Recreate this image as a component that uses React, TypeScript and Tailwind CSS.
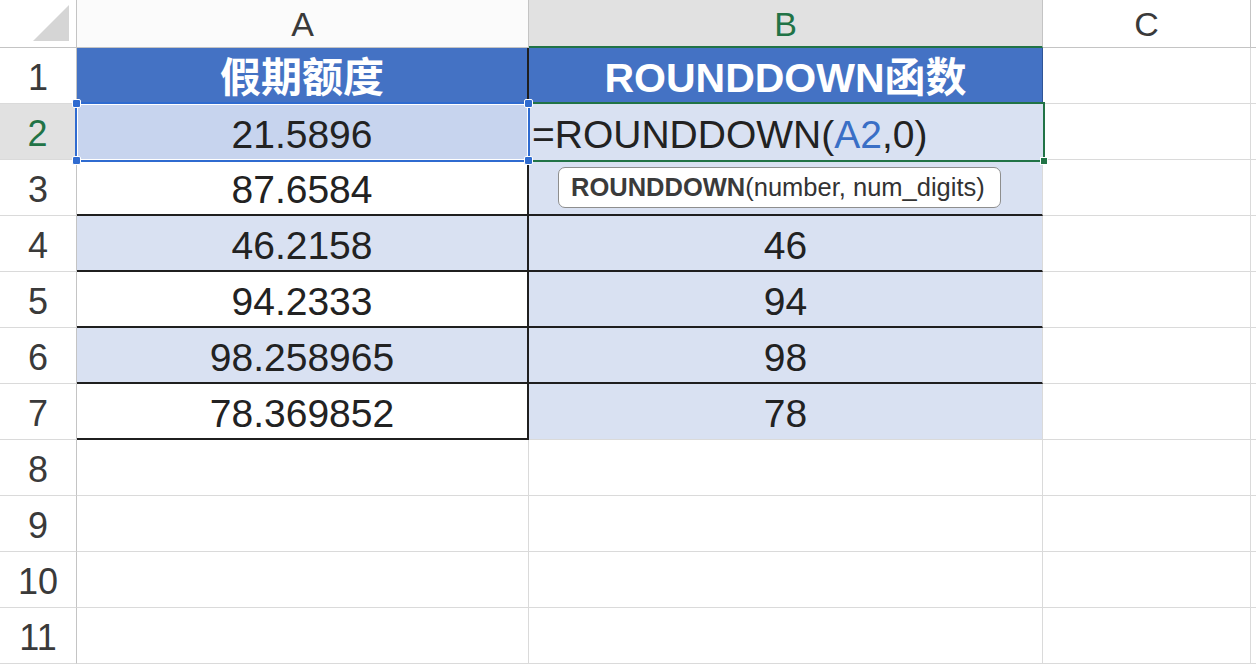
import React from "react";

const num = "flex items-center justify-center pt-[6px] text-[39px] text-[#222222]";
const rowHdr =
  "flex items-center justify-center pt-[5px] border-r border-b border-r-[#c4c4c4] border-b-[#dadada] bg-white text-[36px] text-[#3a3a3a]";
const plain = "border-r border-b border-[#dadada] bg-white";

function Handle({ pos }: { pos: string }) {
  return (
    <div
      className={
        "absolute w-[9px] h-[9px] rounded-[2px] bg-[#2f6bd0] border border-white " + pos
      }
    />
  );
}

export default function App() {
  const blueFill = "bg-[#d9e1f2]";
  return (
    <div className="w-[1256px] h-[664px] overflow-hidden bg-white font-['Liberation_Sans','Noto_Sans_CJK_SC',sans-serif]">
      <div className="grid grid-cols-[77px_452px_514px_208px_5px] grid-rows-[48px_repeat(11,56px)]">
        {/* column header row */}
        <div className="relative border-r border-b border-[#c4c4c4] bg-white">
          <svg className="absolute left-0 top-0" width="77" height="48" viewBox="0 0 77 48">
            <polygon points="33,41 69,41 69,5" fill="#d5d5d5" />
          </svg>
        </div>
        <div className="flex items-center justify-center pt-[2px] border-r border-b border-[#c4c4c4] bg-[#fbfbfb] text-[34px] text-[#3a3a3a]">
          A
        </div>
        <div className="flex items-center justify-center pt-[2px] border-r border-r-[#c4c4c4] border-b-2 border-b-[#217346] bg-[#e1e1e1] text-[34px] text-[#217346]">
          B
        </div>
        <div className="flex items-center justify-center pt-[2px] border-r border-b border-[#c4c4c4] bg-white text-[34px] text-[#3a3a3a]">
          C
        </div>
        <div className="border-b border-[#c4c4c4] bg-white" />

        {/* row 1 */}
        <div className={rowHdr}>1</div>
        <div className="flex items-center justify-center pt-[6px] border-r-2 border-r-[#1f1f1f] bg-[#4472c4] text-[41px] font-bold text-white">
          假期额度
        </div>
        <div className="flex items-center justify-center pt-[6px] border-r border-r-[#2f5597] bg-[#4472c4] text-[41px] font-bold text-white">
          ROUNDDOWN函数
        </div>
        <div className={plain} />
        <div className="border-b border-[#dadada]" />

        {/* row 2 */}
        <div className="flex items-center justify-center pt-[5px] border-r-2 border-b border-r-[#217346] border-b-[#dadada] bg-[#e1e1e1] text-[36px] text-[#217346]">
          2
        </div>
        <div className={"relative border-r-2 border-r-[#1f1f1f] bg-[#c7d4ee] " + num}>
          21.5896
          <div className="absolute z-20 -left-[2px] -top-[2px] -right-[3px] -bottom-[2px] border-2 border-[#2f6bd0] shadow-[inset_0_0_0_1px_#ffffff]">
            <Handle pos="-left-[5px] -top-[5px]" />
            <Handle pos="-right-[5px] -top-[5px]" />
            <Handle pos="-left-[5px] -bottom-[5px]" />
            <Handle pos="-right-[5px] -bottom-[5px]" />
          </div>
        </div>
        <div className={"relative flex items-center pl-[3px] pt-[6px] text-[39px] text-[#222222] " + blueFill}>
          <span>
            =ROUNDDOWN(<span className="text-[#3a6fc6]">A2</span>,0)
          </span>
          <div className="absolute z-10 -left-[2px] -top-[2px] -right-[2px] -bottom-[2px] border-2 border-[#217346]">
            <div className="absolute -right-[5px] -bottom-[5px] w-[8px] h-[8px] bg-[#217346] border border-white" />
          </div>
        </div>
        <div className={plain} />
        <div className="border-b border-[#dadada]" />

        {/* row 3 */}
        <div className={rowHdr}>3</div>
        <div className={"border-r-2 border-b-2 border-[#1f1f1f] bg-white " + num}>87.6584</div>
        <div className={"relative border-r border-r-[#dadada] border-b-2 border-b-[#1f1f1f] " + blueFill}>
          <div className="absolute left-[29px] top-[7px] w-[443px] h-[41px] rounded-[7px] border border-[#8e8e8e] bg-white flex items-center pl-[12px] text-[25.5px] text-[#333333] font-['Liberation_Sans',sans-serif]">
            <span className="font-bold text-[#3b3b3b]">ROUNDDOWN</span>
            <span>(number, num_digits)</span>
          </div>
        </div>
        <div className={plain} />
        <div className="border-b border-[#dadada]" />

        {/* row 4 */}
        <div className={rowHdr}>4</div>
        <div className={"border-r-2 border-b-2 border-[#1f1f1f] " + blueFill + " " + num}>46.2158</div>
        <div className={"border-r border-r-[#dadada] border-b-2 border-b-[#1f1f1f] " + blueFill + " " + num}>46</div>
        <div className={plain} />
        <div className="border-b border-[#dadada]" />

        {/* row 5 */}
        <div className={rowHdr}>5</div>
        <div className={"border-r-2 border-b-2 border-[#1f1f1f] bg-white " + num}>94.2333</div>
        <div className={"border-r border-r-[#dadada] border-b-2 border-b-[#1f1f1f] " + blueFill + " " + num}>94</div>
        <div className={plain} />
        <div className="border-b border-[#dadada]" />

        {/* row 6 */}
        <div className={rowHdr}>6</div>
        <div className={"border-r-2 border-b-2 border-[#1f1f1f] " + blueFill + " " + num}>98.258965</div>
        <div className={"border-r border-r-[#dadada] border-b-2 border-b-[#1f1f1f] " + blueFill + " " + num}>98</div>
        <div className={plain} />
        <div className="border-b border-[#dadada]" />

        {/* row 7 */}
        <div className={rowHdr}>7</div>
        <div className={"border-r-2 border-b-2 border-[#1f1f1f] bg-white " + num}>78.369852</div>
        <div className={"border-r border-r-[#dadada] border-b border-b-[#dadada] " + blueFill + " " + num}>78</div>
        <div className={plain} />
        <div className="border-b border-[#dadada]" />

        {/* rows 8-11 */}
        {[8, 9, 10, 11].map((r) => (
          <React.Fragment key={r}>
            <div className={rowHdr}>{r}</div>
            <div className={plain} />
            <div className={plain} />
            <div className={plain} />
            <div className="border-b border-[#dadada]" />
          </React.Fragment>
        ))}
      </div>
    </div>
  );
}
